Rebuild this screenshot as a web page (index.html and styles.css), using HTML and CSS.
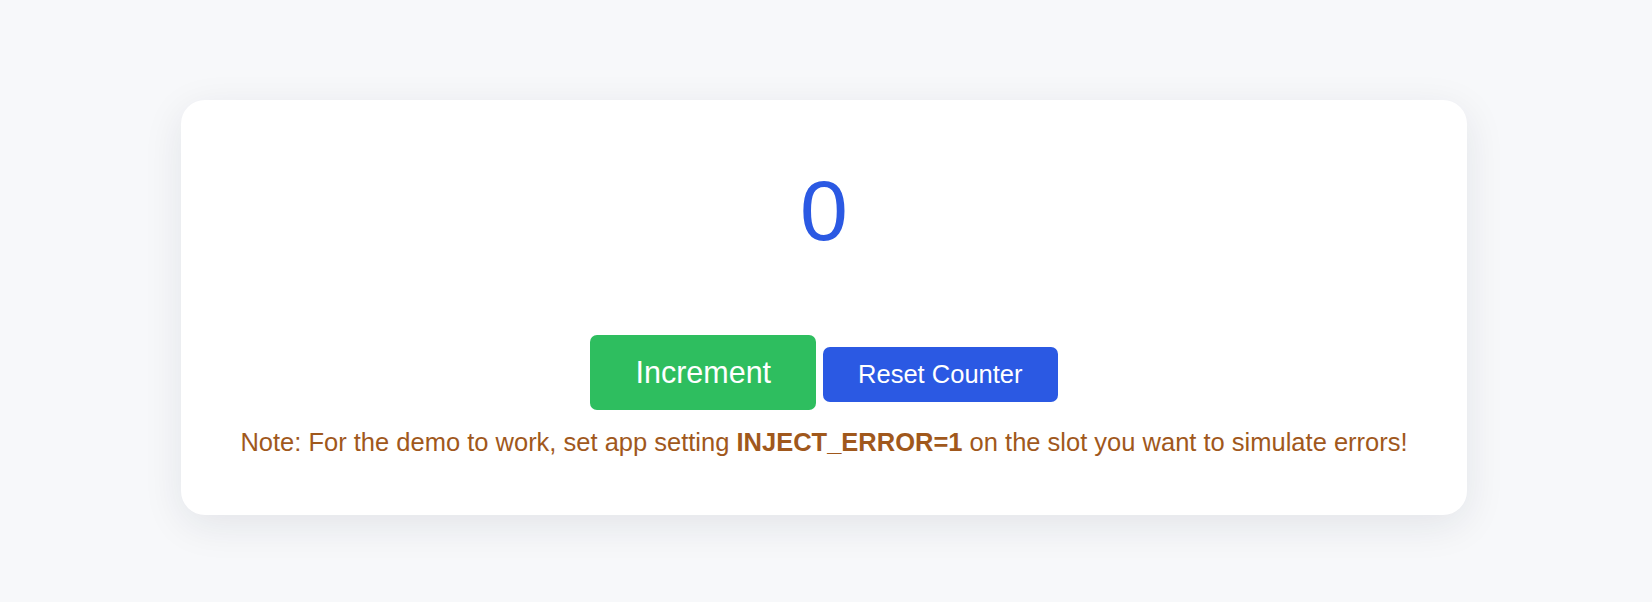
FILE: index.html
```html
<!DOCTYPE html>
<html lang="en">
<head>
<meta charset="utf-8">
<title>Counter</title>
<link rel="stylesheet" href="styles.css">
</head>
<body>
<main class="card">
  <h1 class="count">0</h1>
  <div class="actions">
    <button class="btn btn-inc">Increment</button>
    <button class="btn btn-reset">Reset Counter</button>
  </div>
  <p class="note">Note: For the demo to work, set app setting <strong>INJECT_ERROR=1</strong> on the slot you want to simulate errors!</p>
</main>
</body>
</html>
```
FILE: styles.css
```css
html, body {
  margin: 0;
  padding: 0;
}
html {
  background: #f7f8fa;
}
body {
  box-sizing: border-box;
  min-height: 100vh;
  font-family: "Liberation Sans", Arial, sans-serif;
  padding: 100px 4px 88px 0;
}
.card {
  box-sizing: border-box;
  width: 1286px;
  margin: 0 auto;
  background: #ffffff;
  border-radius: 24px;
  padding: 61px 40px 58px;
  box-shadow: 0 10px 40px rgba(20, 30, 50, 0.09);
}
.count {
  margin: 0;
  text-align: center;
  font-size: 86px;
  font-weight: 400;
  line-height: normal;
  color: #2b59e3;
}
.actions {
  margin-top: 75px;
  display: flex;
  justify-content: center;
  align-items: baseline;
  gap: 7px;
}
.btn {
  font-family: "Liberation Sans", Arial, sans-serif;
  color: #ffffff;
  border: none;
  border-radius: 7px;
  line-height: normal;
  cursor: pointer;
}
.btn-inc {
  background: #2ebe5f;
  font-size: 30.5px;
  padding: 20px 45px;
}
.btn-reset {
  background: #2b59e3;
  font-size: 25.5px;
  padding: 13px 35px;
}
.note {
  margin: 18px 0 0;
  text-align: center;
  font-size: 25.5px;
  line-height: normal;
  color: #a0581c;
}
.note strong {
  font-weight: 700;
}
```
